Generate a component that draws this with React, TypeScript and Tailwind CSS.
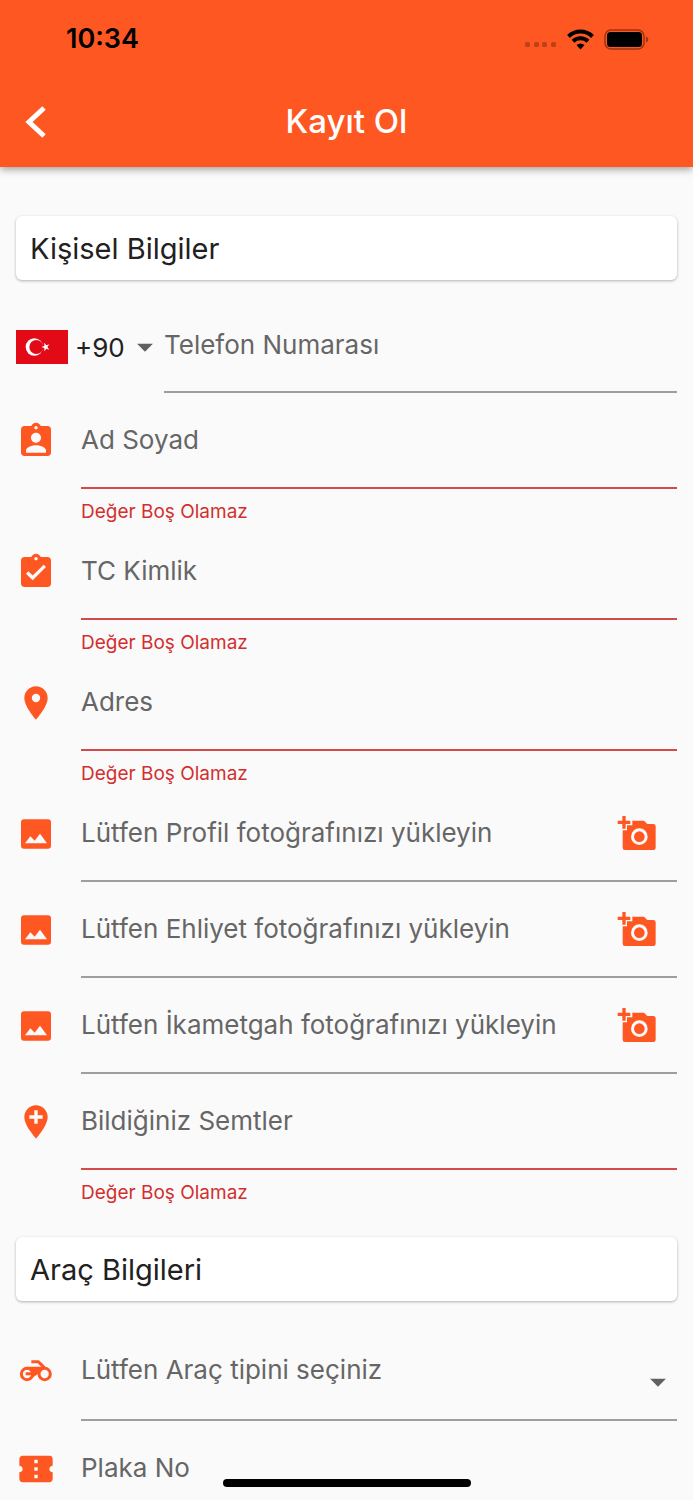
import type { ComponentType, ReactNode } from "react";
import {
  MdAddLocation,
  MdArrowDropDown,
  MdAssignmentInd,
  MdAssignmentTurnedIn,
  MdConfirmationNumber,
  MdPlace,
} from "react-icons/md";

const ERROR_TEXT = "Değer Boş Olamaz";

interface IconProps {
  size?: number;
  className?: string;
}

function PhotoIcon({ size = 40 }: IconProps) {
  return (
    <svg width={size} height={size} viewBox="0 0 120 120" fill="currentColor">
      <path
        fillRule="evenodd"
        d="M24 16h72a9 9 0 0 1 9 9v70a9 9 0 0 1-9 9H24a9 9 0 0 1-9-9V25a9 9 0 0 1 9-9zM27 88h66L72 59 56 80 43 67z"
      />
    </svg>
  );
}

function AddPhotoIcon({ size = 40 }: IconProps) {
  return (
    <svg width={size} height={size} viewBox="0 0 120 120" fill="currentColor">
      <path d="M16 6h10v14h14v10H26v14H16V30H2V20h14z" />
      <path
        fillRule="evenodd"
        d="M46 20h35l10 10h18a7 7 0 0 1 7 7v64a7 7 0 0 1-7 7H24a7 7 0 0 1-7-7V49h13V34h16zM67 43a25 25 0 1 0 0 50 25 25 0 0 0 0-50zm0 9a16 16 0 1 1 0 32 16 16 0 0 1 0-32z"
      />
    </svg>
  );
}

function MotorcycleIcon({ size = 40 }: IconProps) {
  return (
    <svg width={size} height={size} viewBox="0 0 120 120" fill="none" stroke="currentColor" strokeWidth="9">
      <circle cx="33" cy="69" r="17" />
      <circle cx="86" cy="69" r="17" />
      <path d="M29 68h22M46 32h21l18 18" />
      <path d="M33 47h51l-11 9-8 13-12 9-4-9-5-12H33z" fill="currentColor" stroke="none" />
    </svg>
  );
}

function StatusBar() {
  return (
    <div className="flex h-[78px] items-center justify-between pr-11 pl-[66px] text-black">
      <span className="text-[27px] font-semibold">10:34</span>
      <div className="flex items-center gap-[10px]">
        <svg className="mt-3" width="32" height="6" viewBox="0 0 32 6" fill="#000" fillOpacity="0.25">
          <rect width="5" height="5" rx="1.5" />
          <rect x="9" width="5" height="5" rx="1.5" />
          <rect x="17" width="5" height="5" rx="1.5" />
          <rect x="26" width="5" height="5" rx="1.5" />
        </svg>
        <svg width="27" height="21" viewBox="0 0 27 21" fill="none" stroke="#000" strokeWidth="4">
          <path d="M1.5 7.5a17 17 0 0 1 24 0M6 12.2a10.7 10.7 0 0 1 15 0" />
          <path d="M9.5 16a6 6 0 0 1 8 0l-4 4.5z" fill="#000" stroke="none" />
        </svg>
        <svg width="45" height="21" viewBox="0 0 45 21" fill="#000">
          <rect x="1" y="1" width="39" height="19" rx="6" fill="none" stroke="#000" strokeOpacity="0.4" strokeWidth="1.5" />
          <rect x="3" y="3" width="35" height="15" rx="3.5" />
          <path d="M42 7.5c3 1 3 5 0 6z" fillOpacity="0.4" />
        </svg>
      </div>
    </div>
  );
}

function Header() {
  return (
    <header className="relative z-10 bg-[#ff5722] shadow-[0_2px_8px_rgba(0,0,0,0.4)]">
      <StatusBar />
      <div className="grid h-[89px] grid-cols-[72px_1fr_72px] items-center pb-[2px]">
        <button type="button" aria-label="Geri" className="flex h-full items-center pl-6 text-white">
          <svg width="24" height="34" viewBox="0 0 24 34" fill="none" stroke="currentColor" strokeWidth="5">
            <path d="M20 3L5 17l15 14" />
          </svg>
        </button>
        <h1 className="text-center text-[33px] font-medium text-white">Kayıt Ol</h1>
      </div>
    </header>
  );
}

function SectionTitle({ children }: { children: ReactNode }) {
  return (
    <h2 className="flex h-16 items-center rounded-md bg-white px-[14px] pt-[2px] text-[29px] text-[#212121] shadow-[0_1px_3px_rgba(0,0,0,0.3)]">
      {children}
    </h2>
  );
}

interface FieldProps {
  id: string;
  label: string;
  icon: ComponentType<IconProps>;
  error?: boolean;
  upload?: boolean;
}

function Field({ id, label, icon: Icon, error, upload }: FieldProps) {
  return (
    <div className={error ? "h-[131px]" : "h-24"}>
      <div className="flex">
        <label htmlFor={id} className="flex w-[65px] shrink-0 items-center text-[#ff5722]">
          <Icon size={40} />
        </label>
        <div className={`flex h-24 flex-1 border-b-2 ${error ? "border-[#d34a4a]" : "border-[#9e9e9e]"}`}>
          <input
            id={id}
            type="text"
            aria-label={label}
            aria-invalid={error}
            readOnly={upload}
            placeholder={label}
            className="min-w-0 flex-1 bg-transparent pb-[2px] text-[26px] text-[#212121] outline-none placeholder:text-[#666666]"
          />
          {upload && (
            <button
              type="button"
              aria-label={`${label} - fotoğraf ekle`}
              className="flex w-[60px] items-center pt-[2px] text-[#ff5722]"
            >
              <AddPhotoIcon size={40} />
            </button>
          )}
        </div>
      </div>
      {error && <p className="pt-[9px] pl-[65px] text-[19px] leading-7 text-[#d32f2f]">{ERROR_TEXT}</p>}
    </div>
  );
}

function TurkishFlag() {
  return (
    <svg width="52" height="34" viewBox="0 0 156 102">
      <path fill="#e30a17" d="M0 0h156v102H0z" />
      <circle cx="55" cy="51" r="26" fill="#fff" />
      <circle cx="61" cy="51" r="21" fill="#e30a17" />
      <path fill="#fff" d="M76 51l9-3V38l6 8 9-3-6 8 6 8-9-3-6 8V54z" />
    </svg>
  );
}

function PhoneField() {
  return (
    <div className="flex h-[88px]">
      <button type="button" aria-label="Ülke kodu +90" className="flex h-[88px] w-[148px] items-center pb-1 text-[26px] text-[#212121]">
        <TurkishFlag />
        <span className="ml-[7px] flex-1 text-left">+90</span>
        <MdArrowDropDown size={38} className="text-[#616161]" />
      </button>
      <input
        type="tel"
        aria-label="Telefon Numarası"
        placeholder="Telefon Numarası"
        className="min-w-0 flex-1 border-b-2 border-[#9e9e9e] bg-transparent pb-2 text-[26px] outline-none placeholder:text-[#666666]"
      />
    </div>
  );
}

function VehicleTypeField() {
  return (
    <div className="flex h-[100px]">
      <label htmlFor="vehicle-type" className="flex w-[65px] shrink-0 items-center text-[#ff5722]">
        <MotorcycleIcon size={40} />
      </label>
      <div className="grid flex-1 border-b-2 border-[#9e9e9e]">
        <select
          id="vehicle-type"
          aria-label="Araç tipi"
          defaultValue=""
          className="col-start-1 row-start-1 w-full appearance-none bg-transparent pb-[2px] text-[26px] text-[#666666] outline-none"
        >
          <option value="">Lütfen Araç tipini seçiniz</option>
          <option value="motosiklet">Motosiklet</option>
        </select>
        <MdArrowDropDown
          size={38}
          className="pointer-events-none col-start-1 row-start-1 mt-6 self-center justify-self-end text-[#616161]"
        />
      </div>
    </div>
  );
}

export default function App() {
  return (
    <div className="min-h-screen overflow-x-hidden bg-[#fafafa] font-[Inter,sans-serif] text-[#212121]">
      <Header />
      <form className="px-4 pt-[49px]">
        <SectionTitle>Kişisel Bilgiler</SectionTitle>
        <div className="pt-[25px]">
          <PhoneField />
          <Field id="name" label="Ad Soyad" icon={MdAssignmentInd} error />
          <Field id="identity" label="TC Kimlik" icon={MdAssignmentTurnedIn} error />
          <Field id="address" label="Adres" icon={MdPlace} error />
          <Field id="profile-photo" label="Lütfen Profil fotoğrafınızı yükleyin" icon={PhotoIcon} upload />
          <Field id="license-photo" label="Lütfen Ehliyet fotoğrafınızı yükleyin" icon={PhotoIcon} upload />
          <Field id="residence-photo" label="Lütfen İkametgah fotoğrafınızı yükleyin" icon={PhotoIcon} upload />
          <Field id="districts" label="Bildiğiniz Semtler" icon={MdAddLocation} error />
        </div>
        <div className="pt-8">
          <SectionTitle>Araç Bilgileri</SectionTitle>
        </div>
        <div className="pt-5">
          <VehicleTypeField />
          <Field id="plate" label="Plaka No" icon={MdConfirmationNumber} />
        </div>
      </form>
      <div className="fixed inset-x-0 bottom-[13px] flex justify-center">
        <div className="h-2 w-[248px] rounded-full bg-black" />
      </div>
    </div>
  );
}
